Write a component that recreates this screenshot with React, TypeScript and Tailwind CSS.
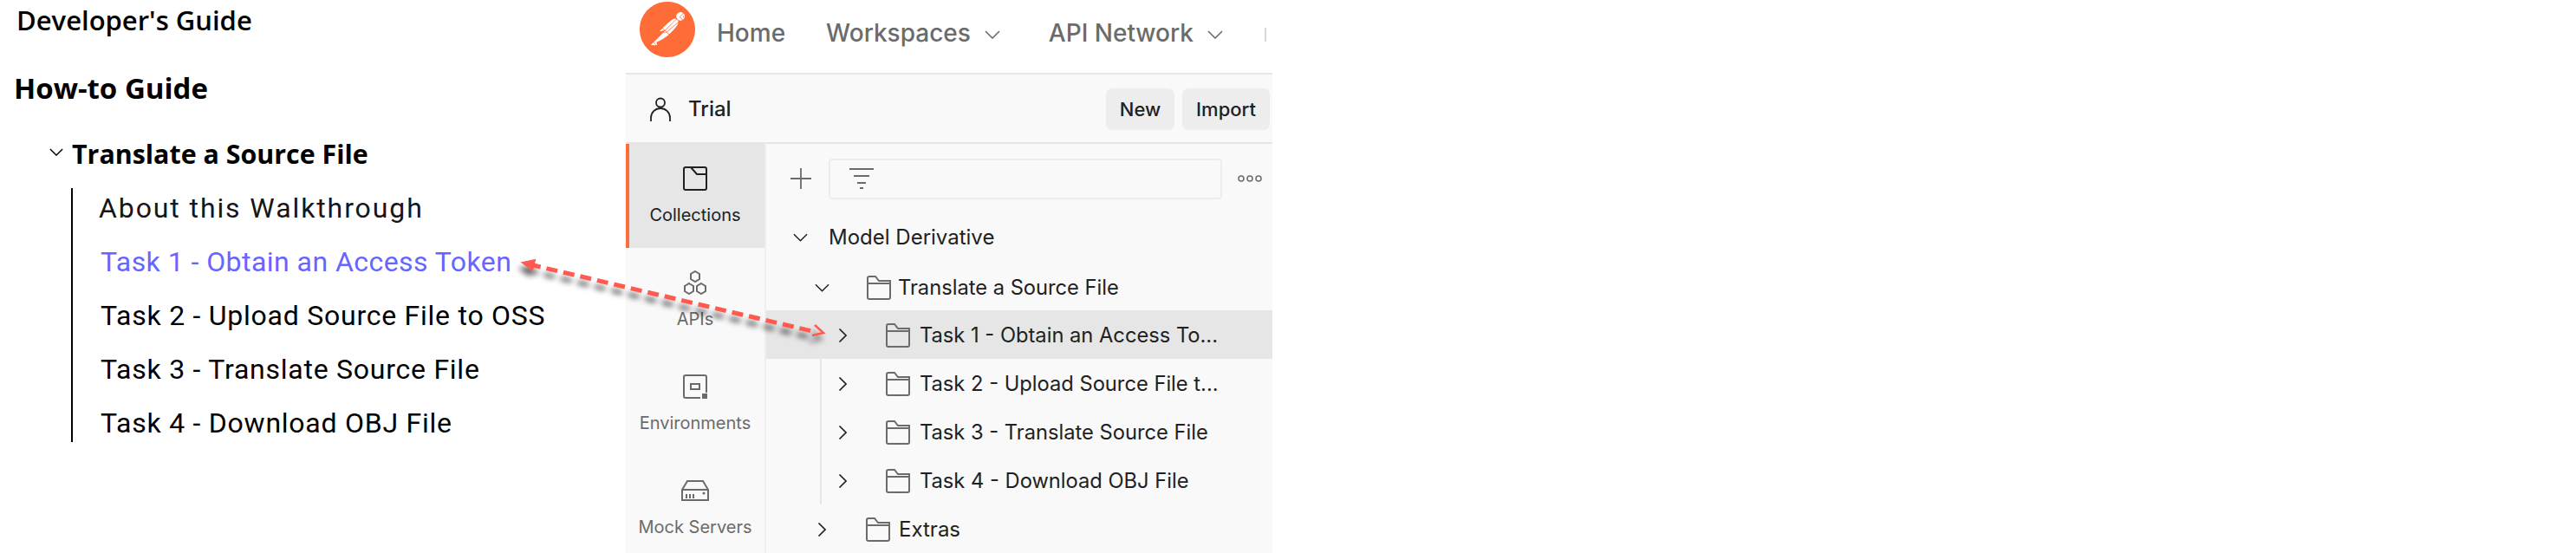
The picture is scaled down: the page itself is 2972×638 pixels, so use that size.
import { SiPostman } from "react-icons/si";

function ChevronDown({ className = "", color = "#212121" }: { className?: string; color?: string }) {
  return (
    <svg viewBox="0 0 18 10" className={className} fill="none" stroke={color} strokeWidth="1.6">
      <path d="M1 1l8 8 8-8" />
    </svg>
  );
}

function ChevronRight({ className = "" }: { className?: string }) {
  return (
    <svg viewBox="0 0 10 16" className={className} fill="none" stroke="#212121" strokeWidth="1.6">
      <path d="M1.5 0.5l7.5 7.5-7.5 7.5" />
    </svg>
  );
}

function Folder() {
  return (
    <svg viewBox="0 0 28 28" className="h-[28px] w-[28px] flex-none" fill="none" stroke="#6b6b6b" strokeWidth="2">
      <path d="M1 3a2 2 0 0 1 2-2h7l4 5h13v19a2 2 0 0 1-2 2H3a2 2 0 0 1-2-2z" />
      <path d="M1 9h26" />
    </svg>
  );
}

function NavItem({ label, chevron }: { label: string; chevron?: boolean }) {
  return (
    <div className="flex h-[32px] items-center gap-4 text-[28px] font-medium leading-none text-[#6b6b6b]">
      {label}
      {chevron && <ChevronDown className="mt-1 h-[10px] w-[18px]" color="#6b6b6b" />}
    </div>
  );
}

function SideItem({ label, active, icon }: { label: string; active?: boolean; icon: React.ReactNode }) {
  return (
    <div
      className={
        active
          ? "flex h-[120px] flex-col items-center border-l-4 border-[#ff6c37] bg-[#e6e6e6] pr-[4px] text-[#212121]"
          : "flex h-[120px] flex-col items-center text-[#6b6b6b]"
      }
    >
      <div className="mt-[26px] flex h-[28px] items-center justify-center">{icon}</div>
      <div className="mt-[16px] text-[20px] leading-[24px]">{label}</div>
    </div>
  );
}

function TaskRow({ label, selected }: { label: string; selected?: boolean }) {
  return (
    <div className={selected ? "flex h-[56px] items-center bg-[#e6e6e6] pt-[1px]" : "flex h-[56px] items-center pt-[1px]"}>
      <ChevronRight className="ml-[83px] h-[16px] w-[10px] flex-none" />
      <div className="ml-[45px]">
        <Folder />
      </div>
      <span className="ml-[11px] whitespace-nowrap text-[23.7px] leading-none text-[#212121]">{label}</span>
    </div>
  );
}

function Guide() {
  const tasks = ["Task 2 - Upload Source File to OSS", "Task 3 - Translate Source File", "Task 4 - Download OBJ File"];
  return (
    <div className="w-[722px] flex-none font-['Roboto',sans-serif] text-black">
      <div className="ml-[19px] mt-[6px] h-[34px] font-['Open_Sans',sans-serif] text-[31px] font-semibold leading-[34px]">
        Developer's Guide
      </div>
      <div className="ml-[16px] mt-[42px] h-[40px] font-['Open_Sans',sans-serif] text-[33px] font-bold leading-[40px]">
        How-to Guide
      </div>
      <div className="mt-[36px] flex h-[40px] items-center">
        <ChevronDown className="ml-[57px] mt-[-6px] h-[9px] w-[16px]" color="#000" />
        <span className="ml-[10px] font-['Open_Sans',sans-serif] text-[30.4px] font-bold leading-[40px]">
          Translate a Source File
        </span>
      </div>
      <div className="ml-[82px] mt-[19px] flex flex-col gap-5 border-l-2 border-black pb-[1px] pl-[30px] pt-[2px] text-[32px] leading-[42px]">
        <div className="h-[42px] tracking-[1.9px] text-[#161616]">About this Walkthrough</div>
        <div className="ml-[2px] h-[42px] tracking-[0.45px] text-[#6666ff]">Task 1 - Obtain an Access Token</div>
        {tasks.map((t) => (
          <div key={t} className="ml-[2px] h-[42px] tracking-[0.75px]">
            {t}
          </div>
        ))}
      </div>
    </div>
  );
}

function Postman() {
  return (
    <div className="h-[638px] w-[746px] flex-none overflow-hidden font-['Inter',sans-serif]">
      <div className="flex h-[84px] items-start bg-white">
        <SiPostman className="ml-[16px] mt-[2px] h-[64px] w-[64px] flex-none" color="#ff6c37" />
        <div className="ml-[25px] mt-[22px] flex items-center gap-[34px]">
          <NavItem label="Home" />
          <div className="ml-[13px]">
            <NavItem label="Workspaces" chevron />
          </div>
          <div className="ml-[22px]">
            <NavItem label="API Network" chevron />
          </div>
        </div>
        <div className="ml-[48px] mt-[32px] h-[16px] w-[2px] bg-[#d8d8d8]" />
      </div>
      <div className="h-[2px] bg-[#e6e6e6]" />
      <div className="flex h-[78px] items-center bg-[#f9f9f9] pt-[2px]">
        <svg viewBox="0 0 24 28" className="ml-[28px] h-[28px] w-[24px] flex-none" fill="none" stroke="#212121" strokeWidth="1.8">
          <circle cx="12" cy="6.5" r="5" />
          <path d="M1 28v-4a11 11 0 0 1 22 0v4" />
        </svg>
        <span className="ml-[20px] text-[24px] font-medium leading-none text-[#212121]">Trial</span>
        <div className="ml-auto mr-[3px] flex gap-[9px] text-[22px] font-medium text-[#212121]">
          <div className="flex h-[48px] w-[79px] items-center justify-center rounded-[7px] bg-[#ededed]">New</div>
          <div className="flex h-[48px] w-[101px] items-center justify-center rounded-[7px] bg-[#ededed]">Import</div>
        </div>
      </div>
      <div className="h-[2px] bg-[#e6e6e6]" />
      <div className="flex h-[472px] bg-[#f9f9f9]">
        <div className="w-[160px] flex-none">
          <SideItem
            active
            label="Collections"
            icon={
              <svg viewBox="0 0 28 28" className="h-[28px] w-[28px]" fill="none" stroke="#212121" strokeWidth="2">
                <path d="M3 1h22a2 2 0 0 1 2 2v22a2 2 0 0 1-2 2H3a2 2 0 0 1-2-2V3a2 2 0 0 1 2-2z" />
                <path d="M9 1l7 8h11" />
              </svg>
            }
          />
          <SideItem
            label="APIs"
            icon={
              <svg viewBox="0 0 28 28" className="h-[28px] w-[28px]" fill="none" stroke="#6b6b6b" strokeWidth="2">
                <path d="M14 1l5 3v6l-5 3-5-3V4z" />
                <path d="M7 15l5 3v6l-5 3-5-3v-6z" />
                <path d="M21 15l5 3v6l-5 3-5-3v-6z" />
              </svg>
            }
          />
          <SideItem
            label="Environments"
            icon={
              <svg viewBox="0 0 28 28" className="h-[28px] w-[28px]" fill="none" stroke="#6b6b6b" strokeWidth="2">
                <path d="M20 27H3a2 2 0 0 1-2-2V3a2 2 0 0 1 2-2h22a2 2 0 0 1 2 2v18" />
                <rect x="9" y="11" width="10" height="6" />
                <rect x="22" y="22" width="6" height="6" fill="#6b6b6b" stroke="none" />
              </svg>
            }
          />
          <SideItem
            label="Mock Servers"
            icon={
              <svg viewBox="0 0 32 24" className="h-[24px] w-[32px]" fill="none" stroke="#6b6b6b" strokeWidth="2">
                <path d="M1 23V11l6-10h18l6 10v12z" />
                <path d="M1 11h30" />
                <path d="M6 16v5M10 16v5M14 16v5" />
                <circle cx="26" cy="15" r="1.5" fill="#6b6b6b" stroke="none" />
              </svg>
            }
          />
        </div>
        <div className="w-[2px] flex-none bg-[#eeeeee]" />
        <div className="min-w-0 flex-1">
          <div className="flex h-[80px] items-center">
            <svg viewBox="0 0 24 24" className="ml-[28px] h-[24px] w-[24px] flex-none" stroke="#6b6b6b" strokeWidth="1.8">
              <path d="M12 0v24M0 12h24" />
            </svg>
            <div className="ml-[20px] flex h-[47px] w-[454px] flex-none items-center rounded-[4px] border-2 border-[#ededed]">
              <svg viewBox="0 0 28 24" className="ml-[22px] h-[24px] w-[28px]" stroke="#6b6b6b" strokeWidth="2">
                <path d="M0 1h28M5 9h18M9 17h10M12 23h4" />
              </svg>
            </div>
            <svg viewBox="0 0 28 8" className="ml-[18px] h-[8px] w-[28px] flex-none" fill="none" stroke="#6b6b6b" strokeWidth="1.5">
              <circle cx="4" cy="4" r="3" />
              <circle cx="14" cy="4" r="3" />
              <circle cx="24" cy="4" r="3" />
            </svg>
          </div>
          <div className="flex h-[56px] items-center">
            <ChevronDown className="ml-[31px] h-[10px] w-[17px] flex-none" />
            <span className="ml-[24px] text-[24px] leading-none text-[#212121]">Model Derivative</span>
          </div>
          <div className="flex h-[56px] items-center pt-[3px]">
            <ChevronDown className="ml-[56px] h-[10px] w-[17px] flex-none" />
            <div className="ml-[43px]">
              <Folder />
            </div>
            <span className="ml-[8px] text-[23.7px] leading-none text-[#212121]">Translate a Source File</span>
          </div>
          <TaskRow selected label="Task 1 - Obtain an Access To..." />
          <div className="ml-[62px] border-l-2 border-[#e6e6e6]">
            <div className="-ml-[64px]">
              <TaskRow label="Task 2 - Upload Source File t..." />
              <TaskRow label="Task 3 - Translate Source File" />
              <TaskRow label="Task 4 - Download OBJ File" />
            </div>
          </div>
          <div className="flex h-[56px] items-center pt-[2px]">
            <ChevronRight className="ml-[59px] h-[16px] w-[10px] flex-none" />
            <div className="ml-[46px]">
              <Folder />
            </div>
            <span className="ml-[10px] text-[24px] leading-none text-[#212121]">Extras</span>
          </div>
        </div>
      </div>
    </div>
  );
}

// callout arrow drawn over both panels
function Arrow() {
  return (
    <svg
      viewBox="0 0 360 92"
      className="absolute left-[597px] top-[298px] h-[92px] w-[360px] drop-shadow-[-3px_7px_3px_rgba(0,0,0,0.6)]"
      fill="none"
      stroke="#ff5a4f"
      strokeWidth="5"
    >
      <path d="M14 7L344 85" strokeDasharray="13 7" />
      <path d="M6 5l14-3-3 11z" fill="#ff5a4f" strokeWidth="2" />
      <path d="M343 77l10 9-13 3" strokeWidth="2.5" />
    </svg>
  );
}

export default function App() {
  return (
    <div className="relative flex h-[638px] w-[2972px] overflow-hidden bg-white">
      <Guide />
      <Postman />
      <Arrow />
    </div>
  );
}
